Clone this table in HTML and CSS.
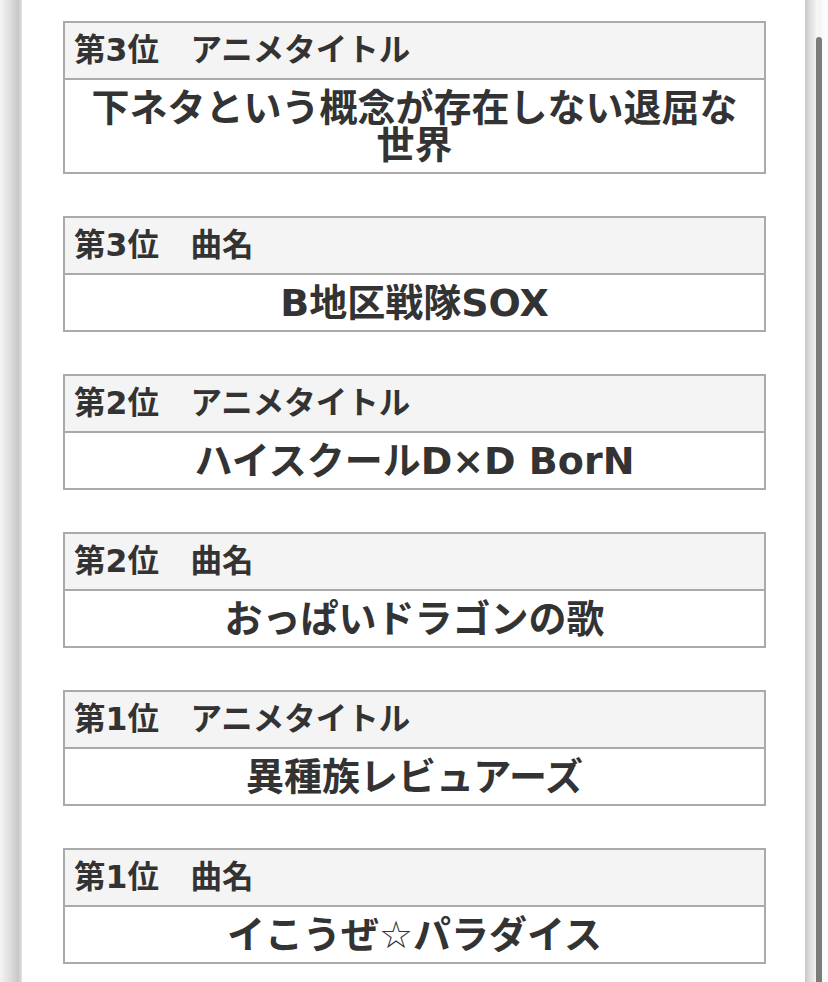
FILE: index.html
```html
<!DOCTYPE html>
<html lang="ja">
<head>
<meta charset="utf-8">
<title>ランキング</title>
<link rel="stylesheet" href="styles.css">
</head>
<body>
<div class="frame">
  <div class="edge-left"></div>
  <main class="content">
    <section class="rank">
      <div class="rank-head">第3位　アニメタイトル</div>
      <div class="rank-body">下ネタという概念が存在しない退屈な世界</div>
    </section>
    <section class="rank">
      <div class="rank-head">第3位　曲名</div>
      <div class="rank-body">B地区戦隊SOX</div>
    </section>
    <section class="rank">
      <div class="rank-head">第2位　アニメタイトル</div>
      <div class="rank-body">ハイスクールD×D BorN</div>
    </section>
    <section class="rank">
      <div class="rank-head">第2位　曲名</div>
      <div class="rank-body">おっぱいドラゴンの歌</div>
    </section>
    <section class="rank">
      <div class="rank-head">第1位　アニメタイトル</div>
      <div class="rank-body">異種族レビュアーズ</div>
    </section>
    <section class="rank">
      <div class="rank-head">第1位　曲名</div>
      <div class="rank-body">イこうぜ☆パラダイス</div>
    </section>
  </main>
  <div class="edge-right">
    <div class="shade"></div>
    <div class="track"><div class="thumb"></div></div>
    <div class="rim"></div>
  </div>
</div>
</body>
</html>
```
FILE: styles.css
```css
html, body {
  margin: 0;
  height: 100%;
  overflow: hidden;
  background: #fff;
}

.frame {
  display: flex;
  height: 982px;
  font-family: "DejaVu Sans", "Noto Sans CJK JP", sans-serif;
  color: #333;
}

.edge-left {
  width: 22px;
  flex: none;
  background: linear-gradient(to right, #f4f4f4 0, #dcdcdc 11px, #c8c8c8 18px, #d2d2d2 20px, #e6e6e6 22px);
}

.content {
  flex: 1;
  padding: 21px 39px 0 41px;
  display: flex;
  flex-direction: column;
  gap: 42px;
}

.rank {
  border: 2px solid #aaa;
  background: #fff;
}

.rank-head {
  background: #f4f4f4;
  border-bottom: 2px solid #aaa;
  font-size: 31.5px;
  line-height: 45px;
  padding: 5px 9px;
  font-weight: bold;
}

.rank-body {
  font-size: 38px;
  line-height: 37px;
  padding: 10px 10px 8px;
  text-align: center;
  font-weight: bold;
}

.edge-right {
  width: 23px;
  flex: none;
  display: flex;
}

.shade {
  width: 11px;
  background: linear-gradient(to right, #c9c9c9, #dedede 5px, #f2f2f2);
}

.track {
  width: 6px;
  padding-top: 37px;
  background: #f6f6f6;
}

.thumb {
  height: 100%;
  background: #7b7b7b;
  border-radius: 3px 3px 0 0;
}

.rim {
  width: 6px;
  background: #fbfbfb;
}
```
